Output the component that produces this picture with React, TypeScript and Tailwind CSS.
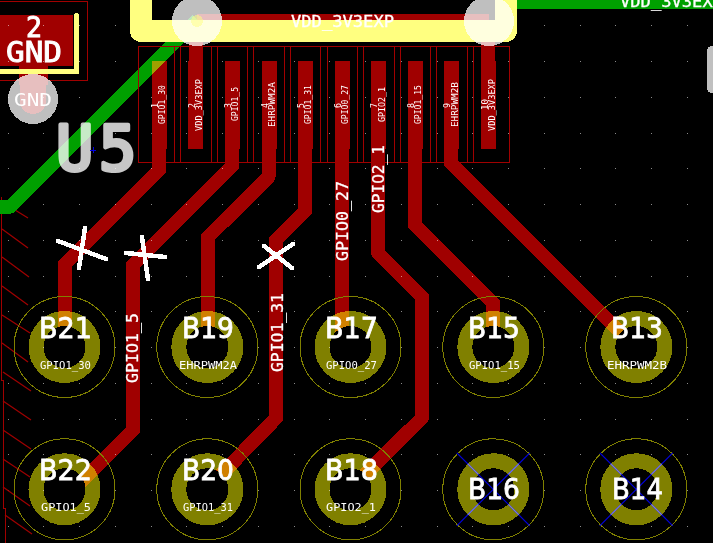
const RED = "#a00000";
const LINE = "#a00000";
const RING = "#808000";
const SANS = "'DejaVu Sans', sans-serif";
const MONO = "'DejaVu Sans Mono', monospace";

const gridX = Array.from({ length: 20 }, (_, i) => 7.5 + i * 35.75);
const gridY = Array.from({ length: 15 }, (_, i) => 25.3 + i * 35.75);

const hatches = [
  [2, 202, 28, 218], [2, 229, 28, 248], [2, 257, 29, 277], [2, 286, 28, 305],
  [2, 315, 30, 333], [2, 343, 28, 362], [3, 372, 31, 391], [3, 401, 31, 420],
  [3, 430, 31, 449], [3, 459, 30, 477], [3, 487, 30, 506], [5, 515, 32, 534],
];

const dividers = [174.5, 180.5, 211.5, 217.5, 247.5, 253.5, 284.5, 290.5, 320.5, 327.5, 357.5, 363.5, 394.5, 400.5, 430.5, 436.5, 467.5, 473.5];

const traces = [
  "159,61 159,170 65,264 65,347",
  "232,61 232,166 133,265 133,430 73,490 65,490",
  "268.5,61 268.5,177 208,237 208,347",
  "305,61 305,211 276,240 276,418 207,489",
  "342,61 342,347",
  "378,61 378,253 422,297 422,418 350.5,489",
  "415,61 415,225 493,303 493,347",
  "451,61 451,163 636,348",
  "196,20 196,61",
  "488,20 488,61",
  "197,21 489,21",
];

const padX = [152, 188, 225, 262, 298, 335, 371, 408, 444, 481];

const holes = [
  { x: 64.5, y: 347, name: "B21", net: "GPIO1_30", x1: 39, x2: 92, nx1: 40, nx2: 91 },
  { x: 207.3, y: 347, name: "B19", net: "EHRPWM2A", x1: 182, x2: 234, nx1: 179, nx2: 237 },
  { x: 350.5, y: 347, name: "B17", net: "GPIO0_27", x1: 325, x2: 378, nx1: 326, nx2: 377 },
  { x: 493.3, y: 347, name: "B15", net: "GPIO1_15", x1: 468, x2: 520, nx1: 469, nx2: 520 },
  { x: 636.3, y: 347, name: "B13", net: "EHRPWM2B", x1: 611, x2: 663, nx1: 607, nx2: 667 },
  { x: 64.5, y: 489.3, name: "B22", net: "GPIO1_5", x1: 39, x2: 92, nx1: 41, nx2: 91 },
  { x: 207.3, y: 489.3, name: "B20", net: "GPIO1_31", x1: 182, x2: 234, nx1: 183, nx2: 233 },
  { x: 350.5, y: 489.3, name: "B18", net: "GPIO2_1", x1: 325, x2: 378, nx1: 326, nx2: 376 },
  { x: 493.3, y: 489.3, name: "B16", net: "", x1: 468, x2: 520, nx1: 0, nx2: 0 },
  { x: 636.3, y: 489.3, name: "B14", net: "", x1: 612, x2: 663, nx1: 0, nx2: 0 },
];

// number x, net baseline x, top and bottom of the rotated net name
const padLabels = [
  { n: "1", nx: 158, net: "GPIO1_30", x: 165, t: 85, b: 124 },
  { n: "2", nx: 195, net: "VDD_3V3EXP", x: 202, t: 79, b: 131 },
  { n: "3", nx: 231, net: "GPIO1_5", x: 238, t: 87, b: 121 },
  { n: "4", nx: 268, net: "EHRPWM2A", x: 275, t: 82, b: 127 },
  { n: "5", nx: 304, net: "GPIO1_31", x: 311, t: 85, b: 124 },
  { n: "6", nx: 341, net: "GPIO0_27", x: 348, t: 85, b: 124 },
  { n: "7", nx: 377, net: "GPIO2_1", x: 385, t: 87, b: 122 },
  { n: "8", nx: 414, net: "GPIO1_15", x: 421, t: 85, b: 124 },
  { n: "9", nx: 450, net: "EHRPWM2B", x: 458, t: 82, b: 127 },
  { n: "10", nx: 488, net: "VDD_3V3EXP", x: 495, t: 79, b: 131 },
];

const netLabels = [
  { t: "GPIO1_5", x: 138, top: 313, bottom: 383 },
  { t: "GPIO1_31", x: 283, top: 293, bottom: 372 },
  { t: "GPIO0_27", x: 348, top: 181, bottom: 261 },
  { t: "GPIO2_1", x: 384, top: 145, bottom: 213 },
];

const crosses = [
  [58, 241, 106, 259], [85, 228, 79, 268],
  [126, 253, 165, 257], [142, 237, 148, 279],
  [264, 246, 292, 268], [293, 244, 259, 267],
];

function Label(props: { text: string; x1: number; x2: number; y: number; size: number; weight?: number; font?: string }) {
  return (
    <text
      x={props.x1}
      y={props.y}
      textLength={props.x2 - props.x1}
      lengthAdjust="spacingAndGlyphs"
      fontFamily={props.font ?? MONO}
      fontSize={props.size}
      fill="#fff"
      stroke="#fff"
      strokeWidth={props.weight ?? 0}
    >
      {props.text}
    </text>
  );
}

function Vertical(props: { text: string; x: number; top: number; bottom: number; size: number; weight?: number }) {
  return (
    <text
      transform={`translate(${props.x} ${props.bottom}) rotate(-90)`}
      textLength={props.bottom - props.top}
      lengthAdjust="spacingAndGlyphs"
      fontFamily={MONO}
      fontSize={props.size}
      fill="#fff"
      stroke="#fff"
      strokeWidth={props.weight ?? 0}
    >
      {props.text}
    </text>
  );
}

// blue cross of an unconnected hole: pure blue on black, paler where it runs over the ring
function NoConnect({ x, y }: { x: number; y: number }) {
  const corners = [[-1, -1], [1, -1], [1, 1], [-1, 1]];
  return (
    <g shapeRendering="geometricPrecision">
      {corners.map(([dx, dy]) => (
        <g key={`${dx}${dy}`}>
          <line x1={x} y1={y} x2={x + dx * 36.5} y2={y + dy * 36.5} stroke="#0000e0" strokeWidth="1.2" />
          <line x1={x + dx * 15} y1={y + dy * 15} x2={x + dx * 25.5} y2={y + dy * 25.5} stroke="#8080e0" strokeWidth="1.2" />
        </g>
      ))}
    </g>
  );
}

export default function App() {
  return (
    <div className="w-[713px] h-[543px] bg-black overflow-hidden">
      <svg width="713" height="543" viewBox="0 0 713 543" className="block isolate" shapeRendering="crispEdges">
        {/* grid */}
        {gridY.map((y) =>
          gridX.map((x) => <rect key={`${x}-${y}`} x={Math.round(x)} y={Math.round(y)} width="1" height="1" fill="#8a8a8a" />)
        )}

        {/* board outline hatch */}
        <polyline points="1.5,197 1.5,380 3.5,380 3.5,508 5.5,508 5.5,543" fill="none" stroke={LINE} />
        <g shapeRendering="geometricPrecision">
          {hatches.map((h, i) => (
            <line key={i} x1={h[0]} y1={h[1]} x2={h[2]} y2={h[3]} stroke={LINE} strokeWidth="1.2" />
          ))}
        </g>

        {/* back copper */}
        <polyline points="-5,207 10,207 197,20" fill="none" stroke="#00a000" strokeWidth="13.5" strokeLinejoin="round" />
        <rect x="517" y="-4" width="200" height="12.6" fill="#00a000" />

        {/* front copper */}
        <g className="mix-blend-screen">
          {traces.map((t) => (
            <polyline key={t} points={t} fill="none" stroke={RED} strokeWidth="14" strokeLinejoin="round" strokeLinecap="butt" />
          ))}
          {padX.map((x) => (
            <rect key={x} x={x} y="61" width="15" height="88" fill={RED} />
          ))}
          <rect x="-2" y="15" width="75" height="51" fill={RED} />
          <rect x="19" y="65" width="29" height="20" fill={RED} />
          <line x1="33" y1="80" x2="33" y2="101" stroke={RED} strokeWidth="26" strokeLinecap="round" />
        </g>

        {/* through holes */}
        {holes.map((h) => (
          <g key={h.name}>
            <circle
              cx={h.x}
              cy={h.y}
              r="28.5"
              fill="none"
              stroke={RING}
              strokeWidth="15"
              className={h.net ? "mix-blend-screen" : ""}
            />
            <circle cx={h.x} cy={h.y} r="50.5" fill="none" stroke={RING} strokeWidth="1" />
            <circle cx={h.x} cy={h.y} r="21" fill="#000" />
          </g>
        ))}
        <NoConnect x={493.3} y={489.3} />
        <NoConnect x={636.3} y={489.3} />

        {/* courtyard */}
        <rect x="138.5" y="46.5" width="371" height="116" fill="none" stroke={LINE} />
        {dividers.map((x) => (
          <line key={x} x1={x} y1="46" x2={x} y2="162" stroke={LINE} />
        ))}
        <rect x="-2" y="1.5" width="89" height="79" fill="none" stroke={LINE} />

        {/* silkscreen */}
        <path d="M141 -12 V31 H506 V-12" fill="none" stroke="#ffff80" strokeWidth="22" strokeLinejoin="round" />
        <path d="M-5 71.5 H76.5 V16" fill="none" stroke="#ffff80" strokeWidth="5.5" strokeLinejoin="round" strokeLinecap="round" />

        {/* vias */}
        {[[197, 21], [489, 21], [33, 99]].map(([x, y]) => (
          <circle key={x} cx={x} cy={y} r="25" fill="#fff" fillOpacity="0.75" />
        ))}
        <circle cx="197" cy="21" r="6" fill="#ffff80" fillOpacity="0.5" />

        {/* U5 reference */}
        <text
          x="56 99"
          y="169.5"
          fontFamily={MONO}
          fontSize="62"
          fill="#fff"
          stroke="#fff"
          strokeWidth="4"
          strokeLinejoin="round"
          opacity="0.78"
        >
          U5
        </text>
        <line x1="93" y1="147" x2="93" y2="153" stroke="#0000e0" />
        <line x1="90" y1="150" x2="96" y2="150" stroke="#0000e0" />

        <rect x="707" y="46" width="12" height="47" rx="5" fill="#c0c0c0" />

        {/* texts */}
        <Label text="2" x1={26} x2={42} y={37} size={29} weight={1} />
        <Label text="GND" x1={6} x2={62} y={62} size={29} weight={1} />
        <Label text="GND" x1={14} x2={52} y={106} size={18} />
        <Label text="VDD_3V3EXP" x1={291} x2={394} y={27} size={16} weight={0.3} />
        <Label text="VDD_3V3EXP" x1={620} x2={723} y={7} size={16} weight={0.3} />

        {holes.map((h) => (
          <Label
            key={h.name}
            text={h.name}
            x1={h.x1}
            x2={h.x2}
            y={h.name === "B16" || h.name === "B14" ? 499 : h.y - 9}
            size={29}
            weight={0.8}
            font={SANS}
          />
        ))}
        {holes.filter((h) => h.net).map((h) => (
          <Label key={h.net + h.x} text={h.net} x1={h.nx1} x2={h.nx2} y={h.y + 22} size={11} />
        ))}

        {padLabels.map((p) => (
          <g key={p.n}>
            <Vertical text={p.n} x={p.nx} top={p.n === "10" ? 99 : 103} bottom={p.n === "10" ? 110 : 108} size={8} />
            <Vertical text={p.net} x={p.x} top={p.t} bottom={p.b} size={9} />
          </g>
        ))}

        {netLabels.map((l) => (
          <Vertical key={l.t} text={l.t} x={l.x} top={l.top} bottom={l.bottom} size={16} weight={0.3} />
        ))}

        {crosses.map((c, i) => (
          <line key={i} x1={c[0]} y1={c[1]} x2={c[2]} y2={c[3]} stroke="#fff" strokeWidth="4.5" strokeLinecap="round" />
        ))}
      </svg>
    </div>
  );
}
